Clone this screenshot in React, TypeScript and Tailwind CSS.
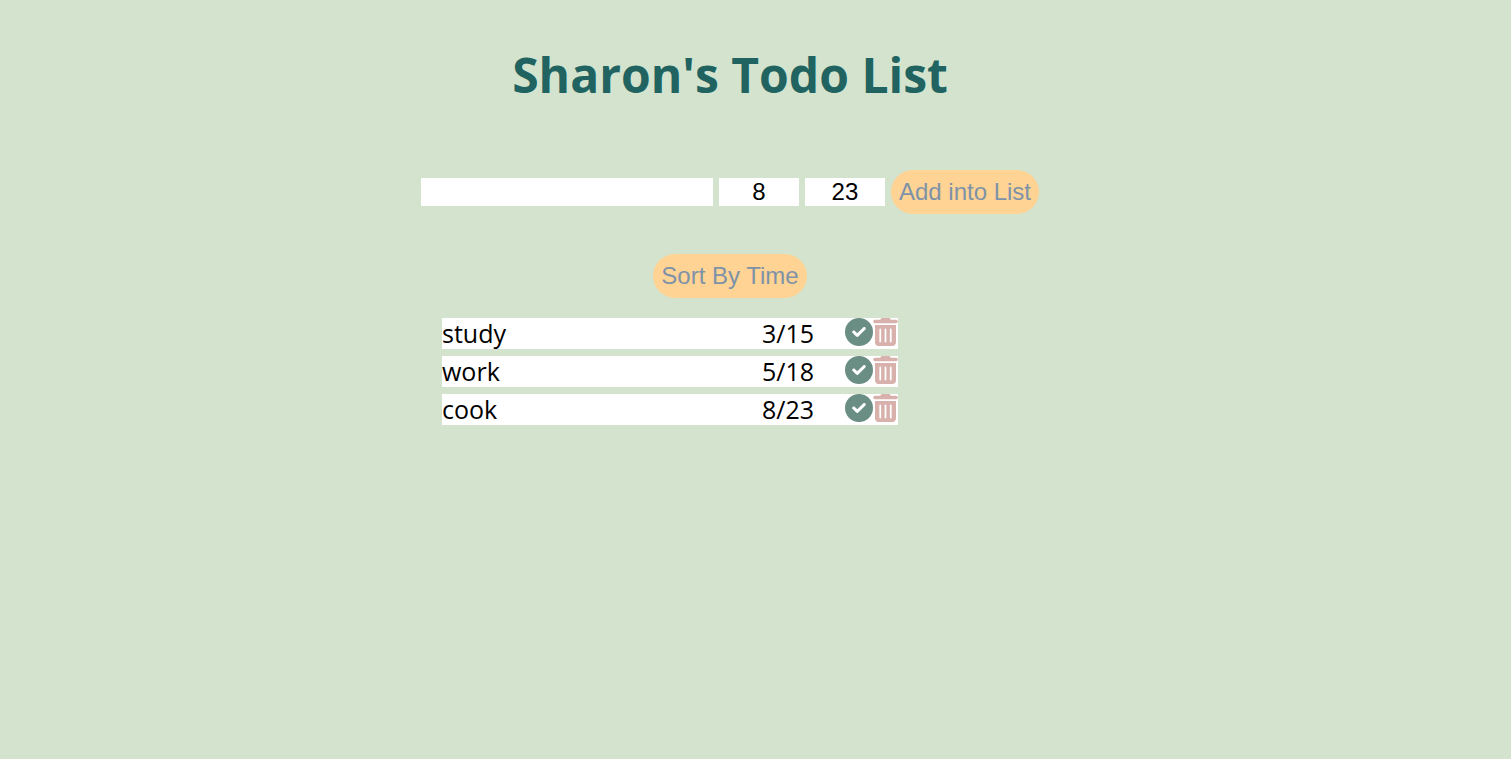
import { useState } from "react";
import type { FormEvent } from "react";
import { FaTrashCan } from "react-icons/fa6";

type Todo = { id: number; text: string; month: number; day: number; done: boolean };

const initialTodos: Todo[] = [
  { id: 1, text: "study", month: 3, day: 15, done: false },
  { id: 2, text: "work", month: 5, day: 18, done: false },
  { id: 3, text: "cook", month: 8, day: 23, done: false },
];

const fieldClass = "h-7 bg-white text-black outline-none";
const pillClass =
  "h-11 rounded-full bg-[#ffd394] px-2 whitespace-nowrap text-[#7e92a8] cursor-pointer";

function CheckIcon() {
  return (
    <svg viewBox="0 0 512 512" className="size-7" fill="currentColor" aria-hidden="true">
      <path d="M0 256a256 256 0 1 1 512 0A256 256 0 1 1 0 256zM371.800 211.800C382.700 200.900 382.700 183.100 371.800 172.200C360.900 161.300 343.100 161.300 332.200 172.200L224 280.400L179.800 236.200C168.900 225.300 151.100 225.300 140.200 236.200C129.300 247.100 129.300 264.900 140.200 275.800L204.200 339.800C215.100 350.700 232.900 350.700 243.800 339.800L371.800 211.800z" fillRule="evenodd" />
    </svg>
  );
}

function TodoRow({
  todo,
  onToggle,
  onRemove,
}: {
  todo: Todo;
  onToggle: () => void;
  onRemove: () => void;
}) {
  return (
    <li className="flex h-[31px] items-center bg-white text-[25px] leading-[31px] text-black">
      <span className={todo.done ? "flex-1 line-through opacity-50" : "flex-1"}>{todo.text}</span>
      <span className="w-[83px]">
        {todo.month}/{todo.day}
      </span>
      <div className="flex h-full items-start">
        <button type="button" aria-label={`Complete ${todo.text}`} onClick={onToggle} className="cursor-pointer text-[#6b8e84]">
          <CheckIcon />
        </button>
        <button type="button" aria-label={`Delete ${todo.text}`} onClick={onRemove} className="cursor-pointer text-[#d8b1ad]">
          <FaTrashCan className="h-7 w-[25px]" />
        </button>
      </div>
    </li>
  );
}

export default function App() {
  const [todos, setTodos] = useState<Todo[]>(initialTodos);
  const [text, setText] = useState("");
  const [month, setMonth] = useState("8");
  const [day, setDay] = useState("23");

  const addTodo = (event: FormEvent) => {
    event.preventDefault();
    if (!text.trim()) return;
    setTodos([...todos, { id: Date.now(), text, month: Number(month), day: Number(day), done: false }]);
    setText("");
  };

  const sortByTime = () =>
    setTodos([...todos].sort((a, b) => a.month - b.month || a.day - b.day));

  return (
    <main className="flex min-h-screen flex-col items-center bg-[#d4e3ce] pt-10 pr-[51px] font-['Open_Sans','Noto_Sans',sans-serif]">
      <h1 className="text-5xl leading-[70px] font-bold text-[#206360]">Sharon's Todo List</h1>

      <form
        onSubmit={addTodo}
        className="mt-[60px] flex items-center gap-1.5 font-['Liberation_Sans',Arial,sans-serif] text-2xl"
      >
        <input
          aria-label="Task"
          value={text}
          onChange={(e) => setText(e.target.value)}
          className={`${fieldClass} w-[292px]`}
        />
        <input
          aria-label="Month"
          value={month}
          onChange={(e) => setMonth(e.target.value)}
          className={`${fieldClass} w-20 text-center`}
        />
        <input
          aria-label="Day"
          value={day}
          onChange={(e) => setDay(e.target.value)}
          className={`${fieldClass} w-20 text-center`}
        />
        <button type="submit" className={pillClass}>
          Add into List
        </button>
      </form>

      <button
        type="button"
        onClick={sortByTime}
        className={`${pillClass} mt-10 font-['Liberation_Sans',Arial,sans-serif] text-2xl`}
      >
        Sort By Time
      </button>

      <ul className="mt-5 mr-[120px] flex w-[456px] flex-col gap-[7px]">
        {todos.map((todo) => (
          <TodoRow
            key={todo.id}
            todo={todo}
            onToggle={() =>
              setTodos(todos.map((t) => (t.id === todo.id ? { ...t, done: !t.done } : t)))
            }
            onRemove={() => setTodos(todos.filter((t) => t.id !== todo.id))}
          />
        ))}
      </ul>
    </main>
  );
}
